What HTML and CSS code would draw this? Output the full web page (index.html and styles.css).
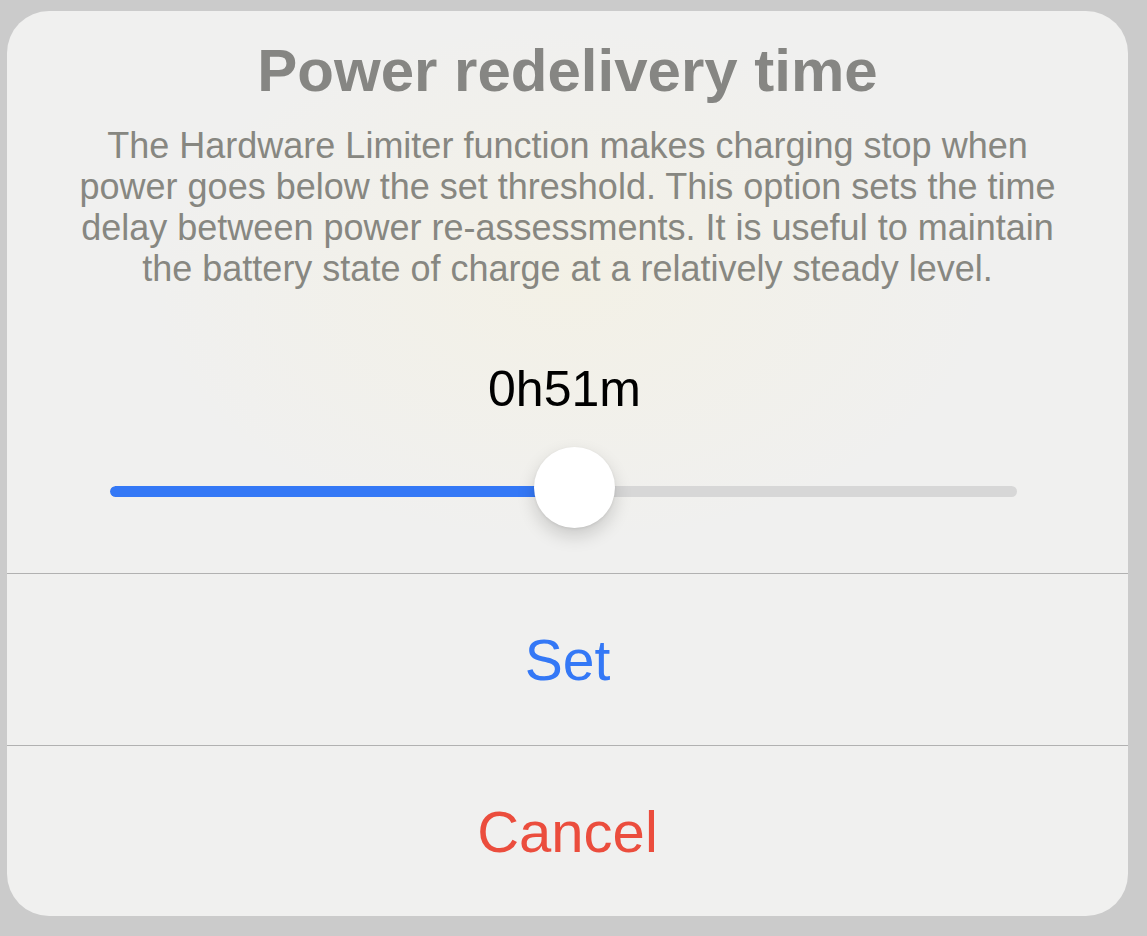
FILE: index.html
```html
<!DOCTYPE html>
<html lang="en">
<head>
<meta charset="utf-8">
<title>Power redelivery time</title>
<link rel="stylesheet" href="styles.css">
</head>
<body>
<div class="alert">
  <div class="alert-body">
    <h1 class="alert-title">Power redelivery time</h1>
    <p class="alert-message">The Hardware Limiter function makes charging stop when<br>power goes below the set threshold. This option sets the time<br>delay between power re-assessments. It is useful to maintain<br>the battery state of charge at a relatively steady level.</p>
    <div class="value">0h51m</div>
    <div class="slider">
      <div class="track">
        <div class="fill" style="width: 51.16%"></div>
      </div>
      <div class="thumb" style="left: 51.16%"></div>
    </div>
  </div>
  <button class="action action-set">Set</button>
  <button class="action action-cancel">Cancel</button>
</div>
</body>
</html>
```

FILE: styles.css
```css
html, body {
  margin: 0;
  padding: 0;
}

body {
  background: #cbcbcb;
  width: 1147px;
  height: 936px;
  padding: 11px 0 0 7px;
  box-sizing: border-box;
  font-family: "Liberation Sans", Arial, sans-serif;
}

.alert {
  width: 1121px;
  height: 905px;
  border-radius: 42px;
  background:
    radial-gradient(ellipse 420px 260px at 50% 30%, rgba(244, 241, 228, 0.8), rgba(244, 241, 228, 0) 100%),
    #f0f0ef;
  display: flex;
  flex-direction: column;
  overflow: hidden;
}

.alert-body {
  height: 562px;
  box-sizing: border-box;
  padding: 25px 107px 0 107px;
  display: flex;
  flex-direction: column;
  align-items: stretch;
  text-align: center;
}

.alert-title {
  margin: 0 -40px;
  font-size: 60px;
  line-height: 70px;
  font-weight: bold;
  color: #868683;
  letter-spacing: 0;
}

.alert-message {
  margin: 19px -60px 0 -60px;
  font-size: 36px;
  line-height: 41px;
  color: #878781;
  white-space: nowrap;
}

.value {
  margin-top: 70px;
  padding-right: 6px;
  font-size: 50px;
  line-height: 60px;
  color: #000;
}

.slider {
  position: relative;
  margin: 28px 4px 0 -4px;
  height: 81px;
  display: flex;
  align-items: center;
}

.track {
  flex: 1;
  height: 11px;
  margin-top: 7px;
  border-radius: 6px;
  background: #d7d7d7;
  overflow: hidden;
}

.fill {
  height: 100%;
  background: #3478f6;
  border-radius: 6px 0 0 6px;
}

.thumb {
  position: absolute;
  top: 0;
  width: 81px;
  height: 81px;
  margin-left: -40.5px;
  border-radius: 50%;
  background: #fff;
  box-shadow: 0 8px 18px rgba(0, 0, 0, 0.16), 0 1px 3px rgba(0, 0, 0, 0.08);
}

.action {
  display: flex;
  align-items: center;
  justify-content: center;
  border: 0;
  border-top: 1px solid #b1b1b1;
  background: transparent;
  margin: 0;
  padding: 0;
  font-family: "Liberation Sans", Arial, sans-serif;
  line-height: normal;
}

.action-set {
  height: 172px;
  font-size: 57px;
  color: #3478f6;
}

.action-cancel {
  height: 171px;
  font-size: 58px;
  color: #eb4d3d;
}
```
